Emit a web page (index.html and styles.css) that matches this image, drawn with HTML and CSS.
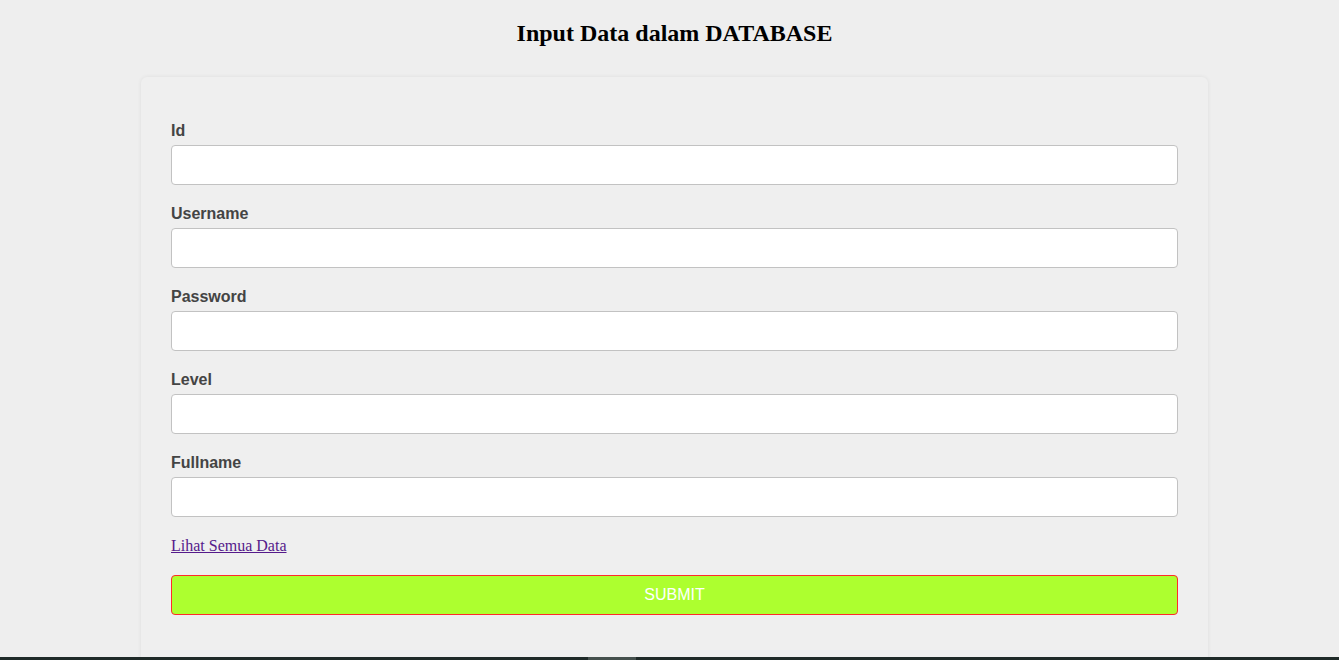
FILE: index.html
```html
<!DOCTYPE html>
<html>
<head>
<meta charset="utf-8">
<title>Input Data</title>
<link rel="stylesheet" href="styles.css">
</head>
<body>
<div class="page">
  <h2 class="title">Input Data dalam DATABASE</h2>
  <div class="card">
    <form class="form">
      <label class="label" for="id">Id</label>
      <input class="field" type="text" id="id">
      <label class="label" for="username">Username</label>
      <input class="field" type="text" id="username">
      <label class="label" for="password">Password</label>
      <input class="field" type="password" id="password">
      <label class="label" for="level">Level</label>
      <input class="field" type="text" id="level">
      <label class="label" for="fullname">Fullname</label>
      <input class="field" type="text" id="fullname">
      <a class="link" href="#">Lihat Semua Data</a>
      <button class="submit" type="button">SUBMIT</button>
    </form>
  </div>
</div>
<div class="hbar"><div class="thumb"></div></div>
</body>
</html>
```
FILE: styles.css
```css
html, body {
  margin: 0;
  padding: 0;
  background: #eeeeee;
  overflow: hidden;
}
.page {
  padding-left: 10px;
}
.title {
  margin: 0;
  padding-top: 19px;
  padding-bottom: 30px;
  line-height: 28px;
  font-family: "Liberation Serif", "Times New Roman", serif;
  font-size: 24px;
  font-weight: bold;
  text-align: center;
  color: #000;
}
.card {
  width: 1067px;
  box-sizing: border-box;
  margin: 0 auto;
  padding: 45px 30px 40px;
  background: #efefef;
  border-radius: 6px;
  box-shadow: 0 0 4px rgba(0, 0, 0, 0.07);
  min-height: 640px;
}
.form {
  display: flex;
  flex-direction: column;
}
.label {
  display: block;
  font-family: "Liberation Sans", Arial, sans-serif;
  font-size: 16px;
  font-weight: bold;
  line-height: 18px;
  color: #444444;
  margin-bottom: 5px;
}
.field {
  display: block;
  box-sizing: border-box;
  width: 100%;
  height: 40px;
  margin: 0 0 20px;
  border: 1px solid #c2c2c2;
  border-radius: 4px;
  background: #fff;
  font-size: 16px;
  padding: 0 10px;
}
.link {
  align-self: flex-start;
  margin-top: 0;
  font-family: "Liberation Serif", "Times New Roman", serif;
  font-size: 16px;
  line-height: 18px;
  color: #551a8b;
  text-decoration: underline;
}
.submit {
  display: block;
  box-sizing: border-box;
  width: 100%;
  height: 40px;
  margin-top: 20px;
  border: 1px solid #ff2a2a;
  border-radius: 4px;
  background: #adff2f;
  color: #ffffff;
  font-family: "Liberation Sans", Arial, sans-serif;
  font-size: 16px;
  cursor: pointer;
}
.hbar {
  position: fixed;
  left: 0;
  right: 0;
  bottom: 0;
  height: 3px;
  background: #1f2a28;
}
.thumb {
  position: absolute;
  left: 588px;
  width: 48px;
  top: 0;
  bottom: 0;
  background: #45504d;
}
```
